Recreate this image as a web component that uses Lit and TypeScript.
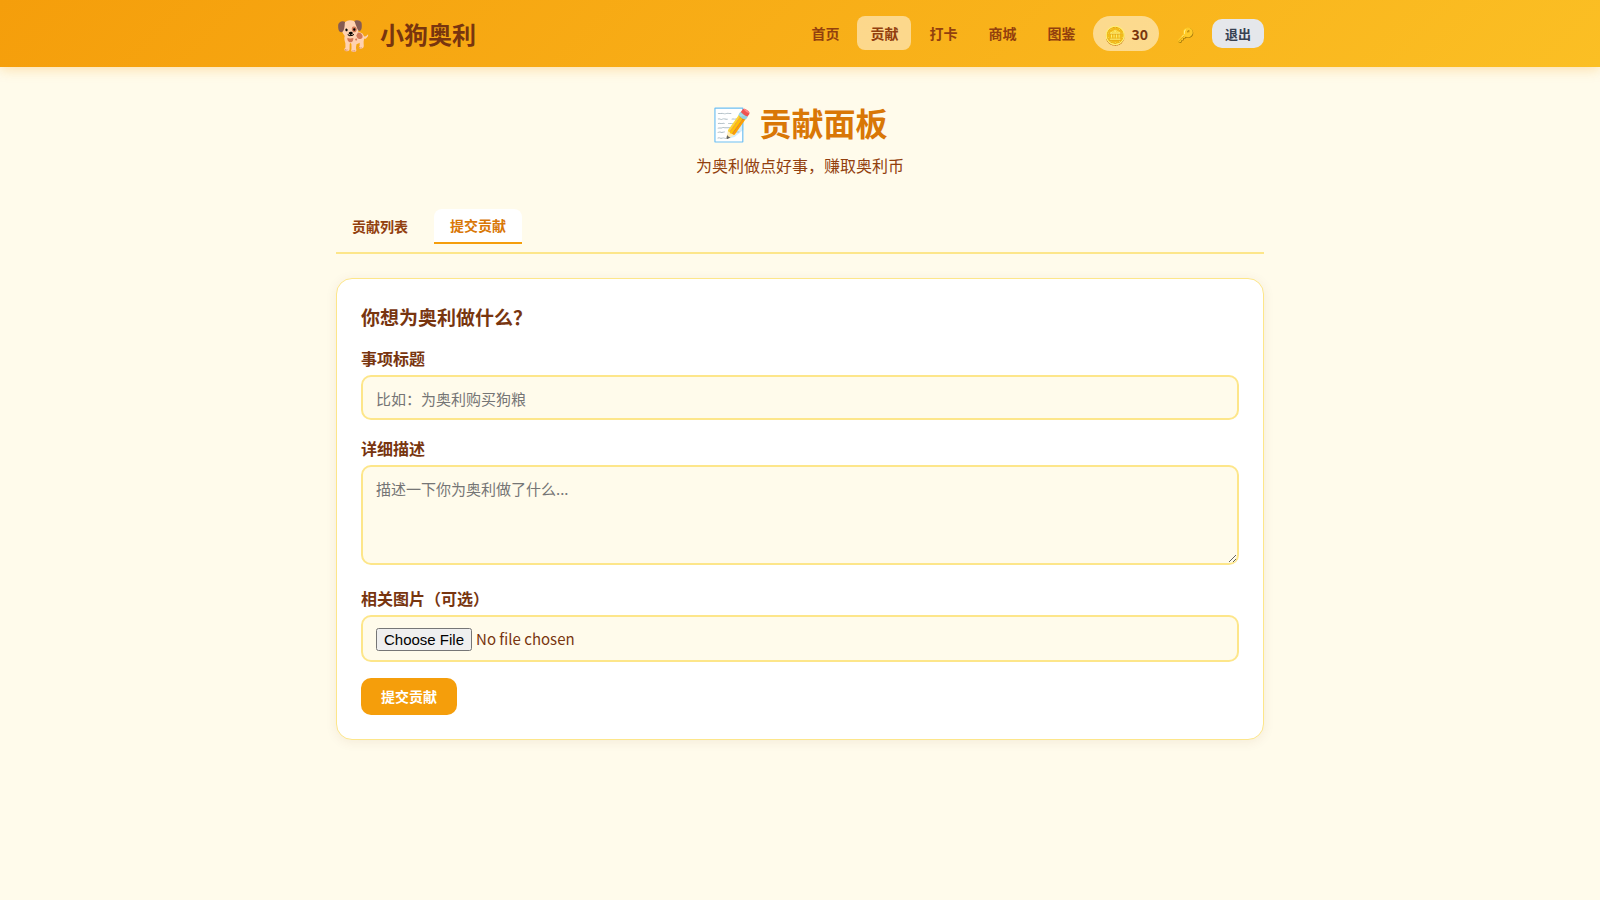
import { LitElement, html, css } from "lit";
import { customElement, state } from "lit/decorators.js";
import { classMap } from "lit/directives/class-map.js";

const NAV = ["首页", "贡献", "打卡", "商城", "图鉴"];
const TABS = ["贡献列表", "提交贡献"];

@customElement("app-root")
export class AppRoot extends LitElement {
  @state() page = "贡献";
  @state() tab = "提交贡献";

  static styles = css`
    :host {
      display: block;
      min-height: 100vh;
      background: #fffbeb;
      color: #78350f;
      font-family: "Noto Sans CJK SC", sans-serif;
      font-size: 16px;
      line-height: 24px;
    }
    * {
      box-sizing: border-box;
    }
    h1,
    h2,
    p {
      margin: 0;
    }
    button,
    input,
    textarea {
      font-family: inherit;
    }
    button {
      border: 0;
      cursor: pointer;
    }
    .header {
      background: linear-gradient(135deg, #f59e0b, #fbbf24);
      box-shadow: 0 2px 12px rgba(245, 158, 11, 0.3);
    }
    .bar,
    .main {
      max-width: 960px;
      margin: 0 auto;
      padding: 16px;
    }
    .bar {
      display: flex;
      align-items: center;
      justify-content: space-between;
    }
    .brand {
      display: flex;
      align-items: center;
      gap: 8px;
      color: inherit;
      font-size: 24px;
      font-weight: 700;
      line-height: 35px;
      text-decoration: none;
    }
    .dog {
      font-size: 29px;
    }
    .nav {
      display: flex;
      align-items: center;
      gap: 5px;
    }
    .link {
      align-self: flex-start;
      padding: 5px 13px;
      border-radius: 8px;
      color: #92400e;
      font-size: 14px;
      font-weight: 600;
      text-decoration: none;
    }
    .link.active {
      background: rgba(255, 255, 255, 0.5);
    }
    .coins {
      display: flex;
      align-items: center;
      gap: 5px;
      height: 35px;
      padding: 0 11px;
      border-radius: 20px;
      background: rgba(255, 255, 255, 0.5);
      font-size: 14px;
      font-weight: 700;
    }
    .coin {
      font-size: 18px;
    }
    .key {
      padding: 5px 13px;
      background: none;
      font-size: 14px;
    }
    .logout {
      padding: 5px 13px;
      border-radius: 10px;
      background: #e5e7eb;
      color: #374151;
      font-size: 13px;
      font-weight: 600;
      line-height: 19px;
    }
    .main {
      padding-top: 32px;
    }
    .intro {
      margin-bottom: 32px;
      text-align: center;
    }
    .title {
      margin-bottom: 8px;
      color: #d97706;
      font-size: 32px;
      line-height: 46px;
    }
    .subtitle {
      color: #92400e;
    }
    .tabs {
      display: flex;
      gap: 10px;
      margin-bottom: 24px;
      padding-bottom: 8px;
      border-bottom: 2px solid #fde68a;
    }
    .tab {
      padding: 6px 16px;
      border-radius: 8px 8px 0 0;
      background: none;
      color: #92400e;
      font-size: 14px;
      font-weight: 600;
      line-height: 21px;
    }
    .tab.active {
      border-bottom: 2px solid #f59e0b;
      background: #fff;
      color: #d97706;
    }
    .card {
      padding: 24px;
      border: 1px solid #fde68a;
      border-radius: 16px;
      background: #fff;
      box-shadow: 0 2px 12px rgba(120, 53, 15, 0.08);
    }
    .heading {
      margin-bottom: 15px;
      font-size: 19px;
      line-height: 28px;
    }
    .field {
      display: flex;
      flex-direction: column;
      gap: 5px;
      margin-bottom: 16px;
    }
    .label {
      font-weight: 600;
    }
    .input {
      width: 100%;
      padding: 11px 13px 9px;
      border: 2px solid #fde68a;
      border-radius: 10px;
      background: #fffbeb;
      color: #78350f;
      font-size: 15px;
    }
    .area {
      min-height: 100px;
      margin-bottom: 5px;
      resize: vertical;
    }
    .submit {
      padding: 8px 20px;
      border-radius: 10px;
      background: #f59e0b;
      color: #fff;
      font-size: 14px;
      font-weight: 600;
      line-height: 21px;
    }
  `;

  render() {
    return html`
      <header class="header">
        <div class="bar">
          <a class="brand" href="#"><span class="dog">🐕</span><span>小狗奥利</span></a>
          <nav class="nav">
            ${NAV.map(
              (name) => html`<a
                href="#"
                class=${classMap({ link: true, active: name === this.page })}
                @click=${() => (this.page = name)}
                >${name}</a
              >`
            )}
            <span class="coins"><span class="coin">🪙</span>30</span>
            <button class="key">🔑</button>
            <button class="logout">退出</button>
          </nav>
        </div>
      </header>
      <main class="main">
        <div class="intro">
          <h1 class="title">📝 贡献面板</h1>
          <p class="subtitle">为奥利做点好事，赚取奥利币</p>
        </div>
        <div class="tabs">
          ${TABS.map(
            (name) => html`<button
              class=${classMap({ tab: true, active: name === this.tab })}
              @click=${() => (this.tab = name)}
            >
              ${name}
            </button>`
          )}
        </div>
        <form class="card" @submit=${(e: Event) => e.preventDefault()}>
          <h2 class="heading">你想为奥利做什么？</h2>
          <div class="field">
            <label class="label" for="title">事项标题</label>
            <input class="input" id="title" type="text" placeholder="比如：为奥利购买狗粮" />
          </div>
          <div class="field">
            <label class="label" for="detail">详细描述</label>
            <textarea class="input area" id="detail" placeholder="描述一下你为奥利做了什么..."></textarea>
          </div>
          <div class="field">
            <label class="label" for="photo">相关图片（可选）</label>
            <input class="input" id="photo" type="file" accept="image/*" />
          </div>
          <button class="submit">提交贡献</button>
        </form>
      </main>
    `;
  }
}
